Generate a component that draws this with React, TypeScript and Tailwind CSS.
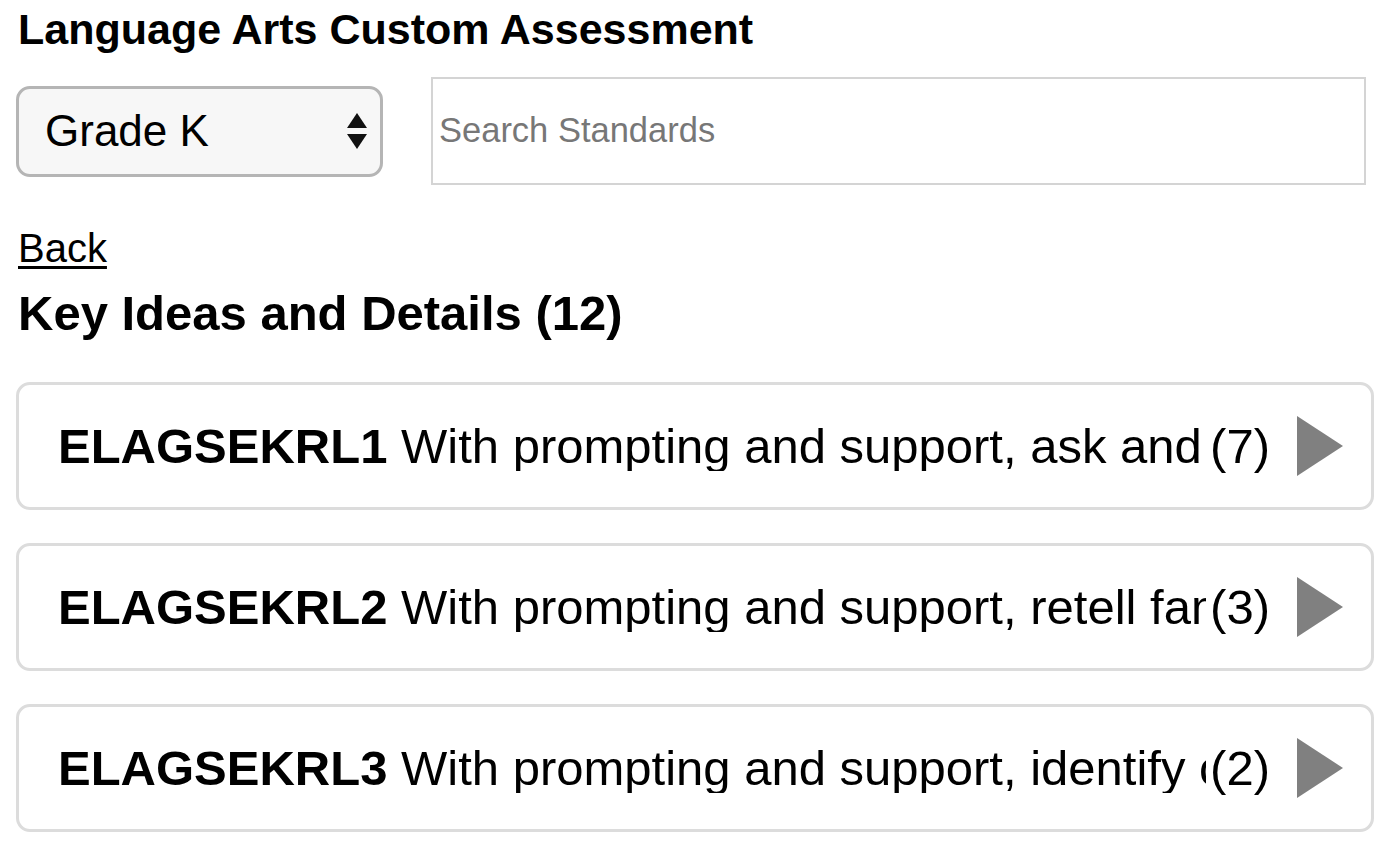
import React from "react";

const rows = [
  { code: "ELAGSEKRL1", text: "With prompting and support, ask and answer questions about key details in a text.", count: 7 },
  { code: "ELAGSEKRL2", text: "With prompting and support, retell familiar stories, including key details.", count: 3 },
  { code: "ELAGSEKRL3", text: "With prompting and support, identify characters, settings, and major events in a story.", count: 2 },
];

export default function App() {
  return (
    <div className="w-[1396px] h-[846px] bg-white overflow-hidden pl-[16px] pr-[22px] text-black" style={{ fontFamily: '"Liberation Sans", Arial, sans-serif' }}>
      <h1 className="text-[43px] font-bold leading-[48px] pt-[5px] pl-[2px]">Language Arts Custom Assessment</h1>
      <div className="flex items-center mt-[24px] h-[108px] pr-[8px]">
        <div className="w-[367px] h-[91px] rounded-[14px] border-[3px] border-[#b5b5b5] bg-[#f7f7f7] flex items-center justify-between pl-[26px] pr-[12px]">
          <span className="text-[44px] leading-none">Grade K</span>
          <svg width="22" height="40" viewBox="0 0 22 40">
            <polygon points="11,2 21,17 1,17" fill="#111" />
            <polygon points="1,23 21,23 11,38" fill="#111" />
          </svg>
        </div>
        <div className="ml-[48px] flex-1 h-[108px] border-[2px] border-[#d4d4d4] flex items-center pl-[6px]">
          <span className="text-[34.5px] text-[#777777]">Search Standards</span>
        </div>
      </div>
      <div className="mt-[40px] pl-[2px]">
        <a className="text-[40px] leading-[46px] underline decoration-[3px] underline-offset-[4px]">Back</a>
      </div>
      <h2 className="text-[49px] font-bold leading-[56px] pl-[2px] mt-[14px]">Key Ideas and Details (12)</h2>
      <div className="flex flex-col gap-[33px] mt-[41px]">
        {rows.map((r) => (
          <div key={r.code} className="h-[128px] rounded-[14px] border-[3px] border-[#dcdcdc] flex items-center pl-[39px] pr-[28px]">
            <div className="flex-1 overflow-hidden whitespace-nowrap text-[49px] leading-none">
              <span className="font-bold">{r.code}</span> {r.text}
            </div>
            <span className="text-[49px] leading-none ml-[4px]">({r.count})</span>
            <svg width="46" height="60" viewBox="0 0 46 60" className="ml-[27px]">
              <polygon points="0,0 46,30 0,60" fill="#808080" />
            </svg>
          </div>
        ))}
      </div>
    </div>
  );
}
